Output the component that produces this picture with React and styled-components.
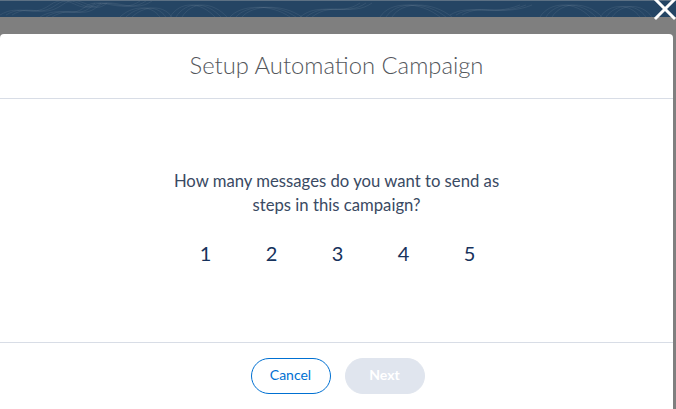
import React, { useState } from 'react'
import styled, { createGlobalStyle } from 'styled-components'

const GlobalStyle = createGlobalStyle`
  html, body {
    margin: 0;
    padding: 0;
    background: #7f7f7f;
    overflow: hidden;
  }
  * { box-sizing: border-box; }
`

const Page = styled.div`
  position: relative;
  width: 676px;
  height: 409px;
  background: #7f7f7f;
  font-family: Lato, "Open Sans", sans-serif;
  overflow: hidden;
`

const Banner = styled.div`
  height: 17px;
  background: #254564;
  border-top: 1px solid #5d7184;
  overflow: hidden;
  & > svg { display: block; }
`

const Backdrop = styled.div`
  padding: 17px 3px 0 0;
`

const CloseButton = styled.button`
  position: absolute;
  top: -3px;
  right: -2px;
  width: 26px;
  height: 24px;
  padding: 0;
  border: none;
  background: transparent;
  cursor: pointer;
  & > svg { display: block; }
`

const Modal = styled.section`
  background: #fff;
  border-radius: 4px 4px 0 0;
  height: 375px;
  display: flex;
  flex-direction: column;
`

const Header = styled.header`
  height: 65px;
  border-bottom: 1px solid #d8dde6;
  display: flex;
  align-items: center;
  justify-content: center;
  padding-bottom: 3px;
`

const Title = styled.h2`
  margin: 0;
  font-weight: 300;
  font-size: 23.8px;
  color: #54575c;
`

const Body = styled.div`
  height: 244px;
  border-bottom: 1px solid #d8dde6;
  display: flex;
  flex-direction: column;
  align-items: center;
  padding-top: 71px;
`

const Question = styled.p`
  margin: 0;
  width: 360px;
  text-align: center;
  font-size: 16.7px;
  line-height: 23.5px;
  color: #3a4a63;
`

const Steps = styled.div`
  display: flex;
  margin-top: 24px;
  margin-left: 2px;
`

const Step = styled.button`
  width: 66px;
  border: none;
  background: transparent;
  padding: 0;
  font-family: inherit;
  font-size: 20px;
  line-height: 24px;
  color: ${p => (p.$active ? '#0070d2' : '#16325c')};
  cursor: pointer;
`

const Footer = styled.footer`
  display: flex;
  justify-content: center;
  gap: 14px;
  padding: 15px 0 0 2px;
`

const Pill = styled.button`
  width: 80px;
  height: 36px;
  border-radius: 18px;
  padding: 0 0 3px;
  font-family: inherit;
  font-size: 14px;
  border: 1px solid ${p => (p.$disabled ? '#e0e5ee' : '#0070d2')};
  background: ${p => (p.$disabled ? '#e0e5ee' : '#fff')};
  color: ${p => (p.$disabled ? '#fff' : '#0070d2')};
  font-weight: ${p => (p.$disabled ? 700 : 400)};
  cursor: ${p => (p.$disabled ? 'default' : 'pointer')};
`

const waves = [
  'M0 14 C20 2 30 18 50 4 S80 16 95 2',
  'M40 16 C60 4 70 18 85 6 S120 14 140 0',
  'M120 16 C130 6 150 2 160 16',
  'M170 16 C180 0 200 0 215 16',
  'M230 16 C240 4 270 2 290 16',
  'M300 16 C320 0 340 16 360 2',
  'M380 16 C390 0 420 0 440 16',
  'M450 14 C470 2 490 16 520 4',
  'M540 16 C550 0 575 0 590 16',
  'M600 16 C610 2 630 2 640 16',
]

function App() {
  const [steps, setSteps] = useState(null)

  return (
    <Page>
      <GlobalStyle />
      <Banner>
        <svg width="676" height="16" viewBox="0 0 676 16">
          {waves.map((d, i) => (
            <g key={i} fill="none" stroke="rgba(255,255,255,0.07)" strokeWidth="1">
              <path d={d} />
              <path d={d} transform="translate(6 0)" />
              <path d={d} transform="translate(12 0)" />
            </g>
          ))}
        </svg>
      </Banner>
      <CloseButton aria-label="Close">
        <svg width="26" height="24" viewBox="0 0 26 24">
          <path d="M4 3 L22 21 M22 3 L4 21" stroke="#fff" strokeWidth="3" strokeLinecap="square" />
        </svg>
      </CloseButton>
      <Backdrop>
        <Modal>
          <Header>
            <Title>Setup Automation Campaign</Title>
          </Header>
          <Body>
            <Question>How many messages do you want to send as steps in this campaign?</Question>
            <Steps>
              {[1, 2, 3, 4, 5].map(n => (
                <Step key={n} $active={steps === n} onClick={() => setSteps(n)}>{n}</Step>
              ))}
            </Steps>
          </Body>
          <Footer>
            <Pill>Cancel</Pill>
            <Pill $disabled={!steps}>Next</Pill>
          </Footer>
        </Modal>
      </Backdrop>
    </Page>
  )
}

export default App
